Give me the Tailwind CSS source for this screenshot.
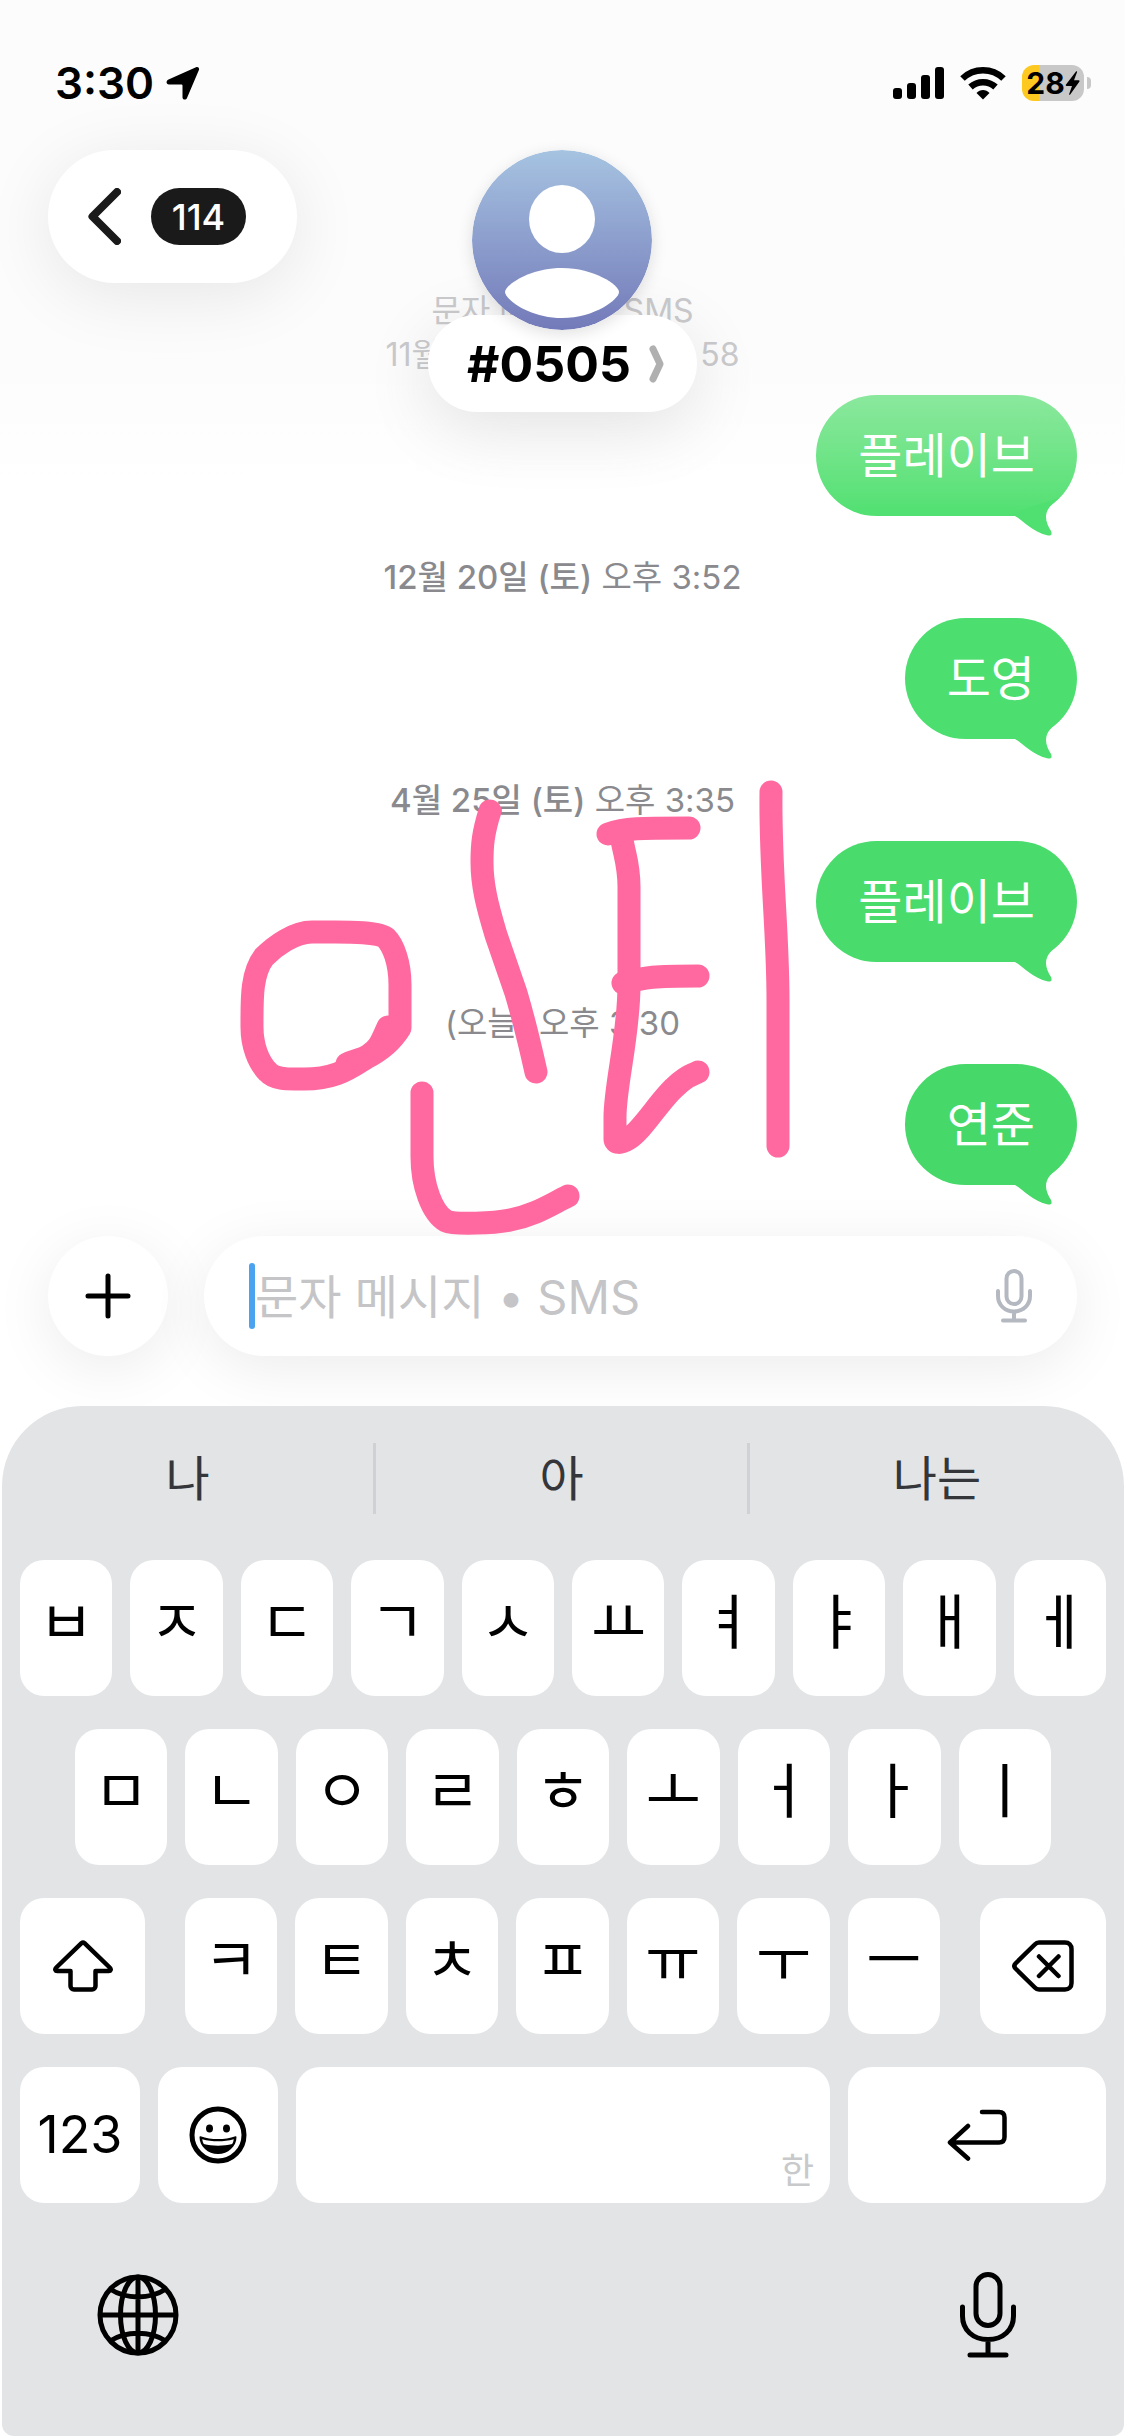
<!DOCTYPE html>
<html lang="ko">
<head>
    <meta charset="UTF-8">
    <title>#0505</title>
    <meta name="viewport" content="width=device-width, initial-scale=1.0">

    <!-- Tailwind CSS CDN -->
    <script src="https://cdn.jsdelivr.net/npm/@tailwindcss/browser@4"></script>
</head>
<body class="relative flex flex-col min-h-screen overflow-x-hidden bg-linear-to-b from-[#fcfcfc] from-15% to-white to-20% text-black font-[Inter,'Noto_Sans_CJK_KR',sans-serif]">

    <!-- Status bar -->
    <div class="flex items-center justify-between h-[150px] pt-4 pl-[55px] pr-[34px]">
        <div class="flex items-center gap-3">
            <span class="text-[44px] leading-[54px] font-semibold">3:30</span>
            <svg class="w-[34px] h-[34px]" viewBox="0 0 34 34" aria-hidden="true">
                <path d="M2.500 13.500 30 1.200c2-.8 3.700.8 2.900 2.800L21 32c-1 2.400-4.500 2-4.500-.800V19.500a1 1 0 0 0-1-1H3c-3 0-3.300-3.800-.500-5Z"/>
            </svg>
        </div>
        <div class="flex items-center gap-4">
            <svg class="w-[51px] h-8" viewBox="0 0 51 32" aria-hidden="true">
                <rect x="0" y="21" width="9" height="11" rx="3"/>
                <rect x="14" y="16" width="9" height="16" rx="3"/>
                <rect x="28" y="8" width="9" height="24" rx="3"/>
                <rect x="42" y="0" width="9" height="32" rx="3"/>
            </svg>
            <svg class="w-[46px] h-[34px]" viewBox="0 0 46 34" aria-hidden="true">
                <g fill="none" stroke="#000" stroke-width="6.500">
                    <path d="M2.500 12.500C14 1.500 32 1.500 43.500 12.500"/>
                    <path d="M10.500 21C17.500 14.500 28.500 14.500 35.500 21"/>
                </g>
                <path d="M23 33.500 16.500 27c3.500-4 9.500-4 13 0Z"/>
            </svg>
            <div class="flex items-center gap-[3px]">
                <div class="flex items-center justify-center w-[62px] h-9 rounded-xl bg-linear-to-r from-[#fdc921] from-28% to-[#c8c8c8] to-28%">
                    <span class="text-[30px] leading-9 font-bold">28</span>
                    <svg class="w-[15px] h-6" viewBox="0 0 15 24" aria-hidden="true">
                        <path d="M11 .500 1 13.500c-.5.700-.2 1.500.7 1.500H7L4.200 23c-.3.900.4 1.100 1 .400L14.300 10.800c.5-.7.2-1.500-.6-1.500H9L12 1.200C12.300.300 11.600-.100 11 .500Z"/>
                    </svg>
                </div>
                <div class="w-1 h-3 rounded-r-full bg-[#c8c8c8]"></div>
            </div>
        </div>
    </div>

    <!-- Conversation header -->
    <header class="relative z-10 grid grid-cols-3 items-start px-12">
        <!-- Rows scrolled under the contact -->
        <div class="absolute inset-x-0 top-[139px] flex flex-col items-center text-[32px] leading-[44px] text-[#cacacc]">
            <p>문자 메시지 • SMS</p>
            <p class="flex justify-between w-[354px]"><span>11월</span><span>58</span></p>
        </div>

        <a href="#" aria-label="뒤로" class="justify-self-start flex items-center gap-[30px] w-[249px] h-[133px] pl-10 rounded-full bg-white shadow-[0_12px_70px_rgba(0,0,0,0.09)]">
            <svg class="w-[33px] h-[57px]" viewBox="0 0 33 57" fill="none" stroke="#1a1a1a" stroke-width="8" stroke-linecap="round" stroke-linejoin="round" aria-hidden="true">
                <path d="M29 4 4.500 28.500 29 53"/>
            </svg>
            <span class="flex items-center justify-center w-[95px] h-[57px] rounded-full bg-[#1a1a1a] text-white text-[36px] leading-none font-medium">114</span>
        </a>

        <div class="relative justify-self-center flex flex-col items-center">
            <svg class="relative z-10 w-[180px] h-[180px] rounded-full shadow-[0_4px_16px_rgba(0,0,0,0.12)]" viewBox="0 0 180 180" aria-hidden="true">
                <defs>
                    <linearGradient id="avatar" x1="0" y1="0" x2="0" y2="1">
                        <stop offset="0" stop-color="#a6c3e1"/>
                        <stop offset="1" stop-color="#737ab9"/>
                    </linearGradient>
                </defs>
                <circle cx="90" cy="90" r="90" fill="url(#avatar)"/>
                <ellipse cx="90" cy="69" rx="33" ry="34" fill="#fff"/>
                <path d="M33 142c0-7 25-24 57-24s57 17 57 24-24 26-57 26-57-19-57-26Z" fill="#fff"/>
            </svg>
            <button class="flex items-center gap-[18px] h-[97px] -mt-[15px] pl-[39px] pr-[33px] pt-[18px] pb-[18px] rounded-full bg-white shadow-[0_16px_70px_rgba(0,0,0,0.11)]">
                <span class="text-[50px] leading-[60px] font-bold">#0505</span>
                <svg class="w-[15px] h-[38px]" viewBox="0 0 15 38" fill="none" stroke="#b0b0b0" stroke-width="7" stroke-linecap="round" stroke-linejoin="round" aria-hidden="true">
                    <path d="M4 4 11 19 4 34"/>
                </svg>
            </button>
        </div>
    </header>

    <!-- Messages -->
    <main class="relative z-10 flex flex-col items-end -mt-[17px] px-12 text-white text-[48px] leading-[121px]">
        <div class="relative h-[121px] px-[42px] rounded-full bg-linear-to-b from-[#8ae89d] to-[#50e071]">
            플레이브
            <svg class="absolute right-0 -bottom-5 w-[70px] h-[45px]" viewBox="0 0 70 45" fill="#50e071" aria-hidden="true"><path d="M0 24H6C14 27 24 41 41 44.500Q46 45 44 40C41 35 39 31 39 26 39 18 45 13 52 7L30 14Z"/></svg>
        </div>

        <p class="self-center mt-[39px] mb-[19px] text-[33px] leading-[44px] text-[#8a8a8e]"><span class="font-medium">12월 20일 (토)</span> 오후 3:52</p>
        <div class="relative h-[121px] px-[42px] rounded-full bg-[#4cdf70]">
            도영
            <svg class="absolute right-0 -bottom-5 w-[70px] h-[45px]" viewBox="0 0 70 45" fill="#4cdf70" aria-hidden="true"><path d="M0 24H6C14 27 24 41 41 44.500Q46 45 44 40C41 35 39 31 39 26 39 18 45 13 52 7L30 14Z"/></svg>
        </div>

        <p class="self-center mt-[39px] mb-[19px] text-[33px] leading-[44px] text-[#8a8a8e]"><span class="font-medium">4월 25일 (토)</span> 오후 3:35</p>
        <div class="relative h-[121px] px-[42px] rounded-full bg-[#4adb6d]">
            플레이브
            <svg class="absolute right-0 -bottom-5 w-[70px] h-[45px]" viewBox="0 0 70 45" fill="#4adb6d" aria-hidden="true"><path d="M0 24H6C14 27 24 41 41 44.500Q46 45 44 40C41 35 39 31 39 26 39 18 45 13 52 7L30 14Z"/></svg>
        </div>

        <p class="self-center mt-[39px] mb-[19px] text-[33px] leading-[44px] text-[#8a8a8e]">(오늘) 오후 3:30</p>
        <div class="relative h-[121px] px-[42px] rounded-full bg-[#46d868]">
            연준
            <svg class="absolute right-0 -bottom-5 w-[70px] h-[45px]" viewBox="0 0 70 45" fill="#46d868" aria-hidden="true"><path d="M0 24H6C14 27 24 41 41 44.500Q46 45 44 40C41 35 39 31 39 26 39 18 45 13 52 7L30 14Z"/></svg>
        </div>
    </main>

    <!-- Composer -->
    <form class="flex gap-9 mt-[51px] mb-[50px] px-12">
        <button type="button" aria-label="추가" class="flex items-center justify-center w-[120px] h-[120px] shrink-0 rounded-full bg-white shadow-[0_12px_60px_rgba(0,0,0,0.08)]">
            <svg class="w-[46px] h-[46px]" viewBox="0 0 46 46" stroke="#000" stroke-width="5" stroke-linecap="round" aria-hidden="true">
                <path d="M23 3v40M3 23h40"/>
            </svg>
        </button>
        <div class="flex flex-1 items-center min-w-0 h-[120px] pl-[45px] pr-[45px] rounded-full bg-white shadow-[0_12px_60px_rgba(0,0,0,0.08)]">
            <div class="w-[6px] h-[66px] shrink-0 rounded-full bg-[#4ba3ef]"></div>
            <input type="text" aria-label="문자 메시지" placeholder="문자 메시지 • SMS" class="flex-1 min-w-0 h-[72px] text-[47px] outline-none placeholder:text-[#c5c5c7]">
            <button type="button" aria-label="받아쓰기">
                <svg class="w-9 h-[54px]" viewBox="0 0 36 54" fill="none" stroke="#b4b8c0" stroke-width="4" stroke-linecap="round" aria-hidden="true">
                    <rect x="10.500" y="2" width="15" height="33" rx="7.500"/>
                    <path d="M2 22v5c0 9 7 15.500 16 15.500S34 36 34 27v-5M18 43v8M7 51.500h22"/>
                </svg>
            </button>
        </div>
    </form>

    <!-- Keyboard -->
    <section class="relative flex flex-col flex-1 ml-[2px] mr-px pt-[37px] px-[18px] rounded-t-[80px] rounded-b-xl bg-[#e2e4e6]">
        <div class="grid grid-cols-3 h-[71px] mb-[46px] -mx-[18px] text-[48px] leading-[66px] text-[#35363a] divide-x-3 divide-[#cfd1d4]">
            <button>나</button>
            <button>아</button>
            <button>나는</button>
        </div>

        <div class="flex flex-col gap-[33px] text-[60px] leading-none">
            <div id="row-1" class="flex gap-[18px]"></div>
            <div id="row-2" class="flex gap-[18px] px-[55px]"></div>
            <div class="flex gap-10">
                <button aria-label="Shift" class="flex items-center justify-center w-[125px] h-[136px] shrink-0 rounded-3xl bg-white">
                    <svg class="w-[60px] h-[52px]" viewBox="0 0 60 52" fill="none" stroke="#000" stroke-width="4.500" stroke-linejoin="round" aria-hidden="true">
                        <path d="M28.500 3.200 3.300 27.500c-1.800 1.800-1 3.500 1 3.500H17.500V46c0 2 1.500 3.500 3.500 3.500H39c2 0 3.500-1.500 3.500-3.500V31H55.700c2 0 2.800-1.700 1-3.500L31.500 3.200c-1-.9-2-.9-3 0Z"/>
                    </svg>
                </button>
                <div id="row-3" class="flex flex-1 gap-[18px]"></div>
                <button aria-label="지우기" class="flex items-center justify-center w-[126px] h-[136px] shrink-0 rounded-3xl bg-white">
                    <svg class="w-[62px] h-[52px]" viewBox="0 0 62 52" fill="none" stroke="#000" stroke-width="4.500" stroke-linecap="round" stroke-linejoin="round" aria-hidden="true">
                        <path d="M27 2.500H53c4 0 6.500 2.500 6.500 6.500V43c0 4-2.500 6.500-6.500 6.500H27c-2 0-3-.7-4.200-2L3.500 28.500c-1.500-1.600-1.500-3.400 0-5L22.800 4.500C24 3.200 25 2.500 27 2.500ZM27 16.500 46.500 36M46.500 16.500 27 36"/>
                    </svg>
                </button>
            </div>
            <div class="flex gap-[18px]">
                <button class="w-[120px] h-[136px] shrink-0 rounded-3xl bg-white text-[52px]">123</button>
                <button aria-label="이모티콘" class="flex items-center justify-center w-[120px] h-[136px] shrink-0 rounded-3xl bg-white">
                    <svg class="w-[58px] h-[58px]" viewBox="0 0 58 58" aria-hidden="true">
                        <circle cx="29" cy="29" r="26" fill="none" stroke="#000" stroke-width="5"/>
                        <ellipse cx="20.500" cy="22.500" rx="3.500" ry="4"/>
                        <ellipse cx="37.500" cy="22.500" rx="3.500" ry="4"/>
                        <path d="M10.500 31c0-.6.500-1 1-.8 11 3.800 24 3.800 35 0 .500-.2 1 .2 1 .8 0 9.500-8.500 17-18.500 17s-18.500-7.500-18.500-17Z"/>
                        <path d="M13.200 33.200c10.300 2.700 21.300 2.700 31.600 0-.3 2-.9 3.600-1.600 4.900-8.400 2.100-20 2.100-28.400 0-.7-1.300-1.300-2.900-1.600-4.900Z" fill="#fff"/>
                    </svg>
                </button>
                <button aria-label="스페이스" class="flex flex-1 items-end justify-end h-[136px] px-4 pb-3 rounded-3xl bg-white text-[36px] leading-[40px] text-[#c8c9cb]">한</button>
                <button aria-label="Return" class="flex items-center justify-center w-[258px] h-[136px] shrink-0 rounded-3xl bg-white">
                    <svg class="w-[60px] h-[52px]" viewBox="0 0 60 52" fill="none" stroke="#000" stroke-width="4.500" stroke-linecap="round" stroke-linejoin="round" aria-hidden="true">
                        <path d="M35 3H52c3.500 0 5.500 2 5.500 5.500V28c0 3.500-2 5.500-5.500 5.500H3M21 17 3 33.500 21 49.500"/>
                    </svg>
                </button>
            </div>
        </div>

        <div class="flex items-center justify-between mt-[69px] pl-[77px] pr-[90px]">
            <button aria-label="다음 키보드">
                <svg class="w-[82px] h-[82px]" viewBox="0 0 82 82" fill="none" stroke="#000" stroke-width="5" aria-hidden="true">
                    <circle cx="41" cy="41" r="38"/>
                    <ellipse cx="41" cy="41" rx="17.500" ry="38"/>
                    <path d="M41 3v76M3 41h76M13 15c16 10.500 40 10.500 56 0M13 67c16-10.500 40-10.500 56 0"/>
                </svg>
            </button>
            <button aria-label="받아쓰기">
                <svg class="w-14 h-[86px]" viewBox="0 0 56 86" fill="none" stroke="#000" stroke-width="5" stroke-linecap="round" aria-hidden="true">
                    <rect x="16" y="2.500" width="24" height="51" rx="12"/>
                    <path d="M2.500 35v9c0 14 10.500 23.500 25.500 23.500S53.500 58 53.500 44v-9M28 68v14M10 83h36"/>
                </svg>
            </button>
        </div>
    </section>

    <!-- Freehand marker strokes -->
    <svg class="absolute top-0 left-0 z-20 w-full pointer-events-none" viewBox="0 0 1125 2436" fill="none" stroke="#ff699f" stroke-width="23" stroke-linecap="round" stroke-linejoin="round" aria-hidden="true">
        <path d="M388 1027C382 1040 380 1048 369 1055 362 1060 354 1060 347 1064"/>
        <path d="M400 1028V985C400 962 393 945 386 938 380 932 348 932 335 932H312C294 932 275 946 264 957 251 974 252 1000 252 1027 252 1045 258 1062 268 1072 275 1080 290 1079 300 1079 335 1080 350 1068 366 1058 380 1051 392 1041 400 1028Z"/>
        <path d="M490 811C483 833 482 845 482 862 482 885 487 905 496 935L516 993C524 1020 530 1045 536 1072"/>
        <path d="M422 1093V1157C422 1185 432 1213 446 1221 455 1225 495 1223 510 1220 535 1215 548 1206 568 1196"/>
        <path d="M608 834C625 828 640 828 689 828"/>
        <path d="M622 840C625 857 629 865 629 887V985C629 1035 615 1085 615 1117V1139C615 1143 620 1144 628 1139 642 1131 660 1100 675 1087 684 1078 688 1077 698 1072"/>
        <path d="M623 983C645 977 655 976 698 976"/>
        <path d="M771 792C770 870 778 930 778 1000V1146"/>
    </svg>

    <script>
        const rows = {
            'row-1': 'ㅂㅈㄷㄱㅅㅛㅕㅑㅐㅔ',
            'row-2': 'ㅁㄴㅇㄹㅎㅗㅓㅏㅣ',
            'row-3': 'ㅋㅌㅊㅍㅠㅜㅡ'
        };

        Object.entries(rows).forEach(([id, keys]) => {
            document.getElementById(id).innerHTML = [...keys].map(key => `
                <button class="flex-1 min-w-0 h-[136px] pb-3 rounded-3xl bg-white">${key}</button>
            `).join('');
        });
    </script>
</body>
</html>
